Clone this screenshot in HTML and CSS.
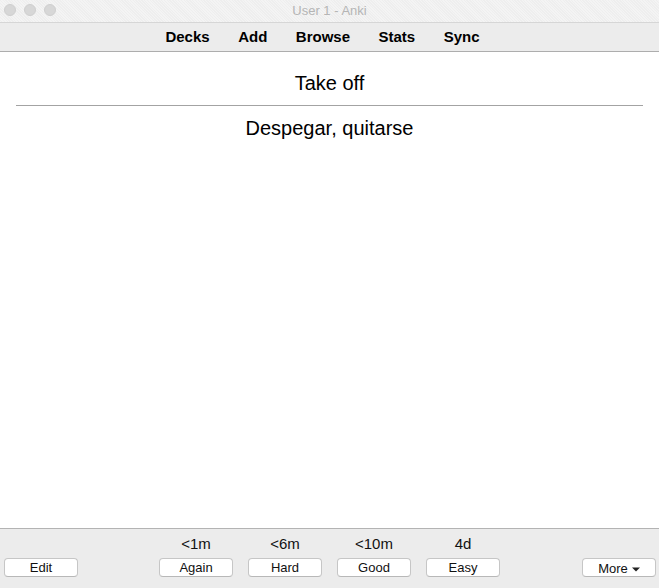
FILE: index.html
```html
<!DOCTYPE html>
<html>
<head>
<meta charset="utf-8">
<title>User 1 - Anki</title>
<link rel="stylesheet" href="styles.css">
</head>
<body>
<div class="window">
  <div class="titlebar">
    <div class="lights">
      <span class="light"></span>
      <span class="light"></span>
      <span class="light"></span>
    </div>
    <div class="title">User 1 - Anki</div>
  </div>
  <nav class="toolbar">
    <a class="nav-item">Decks</a>
    <a class="nav-item">Add</a>
    <a class="nav-item">Browse</a>
    <a class="nav-item">Stats</a>
    <a class="nav-item">Sync</a>
  </nav>
  <main class="card">
    <div class="front">Take off</div>
    <hr class="answer-rule">
    <div class="back">Despegar, quitarse</div>
  </main>
  <footer class="bottombar">
    <div class="left">
      <button class="btn">Edit</button>
    </div>
    <div class="answers">
      <div class="answer-col">
        <span class="due">&lt;1m</span>
        <button class="btn">Again</button>
      </div>
      <div class="answer-col">
        <span class="due">&lt;6m</span>
        <button class="btn">Hard</button>
      </div>
      <div class="answer-col">
        <span class="due">&lt;10m</span>
        <button class="btn">Good</button>
      </div>
      <div class="answer-col">
        <span class="due">4d</span>
        <button class="btn">Easy</button>
      </div>
    </div>
    <div class="right">
      <button class="btn btn-more">More <svg class="caret" width="8" height="5" viewBox="0 0 8 5"><path d="M0 0.5 L8 0.5 L4 4.5 Z" fill="#222"/></svg></button>
    </div>
  </footer>
</div>
</body>
</html>
```
FILE: styles.css
```css
* { box-sizing: border-box; }
html, body {
  margin: 0;
  padding: 0;
  width: 659px;
  height: 588px;
  overflow: hidden;
  background: #ffffff;
  font-family: "Liberation Sans", Arial, Helvetica, sans-serif;
  color: #111;
}
.window {
  display: flex;
  flex-direction: column;
  width: 659px;
  height: 588px;
}
.titlebar {
  position: relative;
  height: 23px;
  flex: none;
  background-color: #f0f0f0;
  background-image: repeating-linear-gradient(45deg, rgba(255,255,255,0.25) 0 1px, rgba(0,0,0,0.008) 1px 2px);
  border-bottom: 1px solid #d6d6d6;
  display: flex;
  align-items: center;
  justify-content: center;
}
.lights {
  position: absolute;
  left: 4px;
  top: 4px;
  display: flex;
  gap: 8px;
}
.light {
  width: 12px;
  height: 12px;
  border-radius: 50%;
  background: #d7d7d7;
  border: 1px solid #cfcfcf;
}
.title {
  font-size: 13px;
  color: #b5b5b5;
  line-height: 15px;
  margin-top: -1px;
}
.toolbar {
  height: 29px;
  flex: none;
  background: #ececec;
  border-bottom: 1px solid #adadad;
  display: flex;
  align-items: center;
  justify-content: center;
  gap: 28.5px;
  padding-right: 14px;
  padding-bottom: 1px;
}
.nav-item {
  font-size: 15px;
  font-weight: bold;
  color: #000;
  line-height: 17px;
}
.card {
  flex: 1;
  padding: 20px 16px 0;
  text-align: center;
  font-size: 20px;
  color: #000;
}
.front, .back {
  line-height: 23px;
}
.answer-rule {
  border: 0;
  border-top: 1px solid #a3a3a3;
  height: 0;
  margin: 10px 0 11px;
}
.bottombar {
  height: 60px;
  flex: none;
  background: #ececec;
  border-top: 1px solid #b3b3b3;
  display: grid;
  grid-template-columns: 1fr auto 1fr;
  align-items: end;
  padding: 0 3px 11px 3px;
}
.left { justify-self: start; margin-left: 1px; }
.right { justify-self: end; }
.answers {
  display: flex;
  gap: 15px;
}
.answer-col {
  display: flex;
  flex-direction: column;
  align-items: center;
  gap: 6px;
}
.due {
  font-size: 15px;
  line-height: 17px;
  color: #111;
}
.btn {
  width: 74px;
  height: 19px;
  padding: 0;
  background: #ffffff;
  border: 1px solid #c6c6c6;
  border-bottom-color: #b8b8b8;
  border-radius: 4px;
  font-family: "Liberation Sans", Arial, Helvetica, sans-serif;
  font-size: 13px;
  line-height: 16px;
  color: #111;
  display: flex;
  align-items: center;
  justify-content: center;
}
.btn-more {
  gap: 4px;
  padding-top: 2px;
}
.caret {
  display: block;
  margin-top: 1px;
}
```
